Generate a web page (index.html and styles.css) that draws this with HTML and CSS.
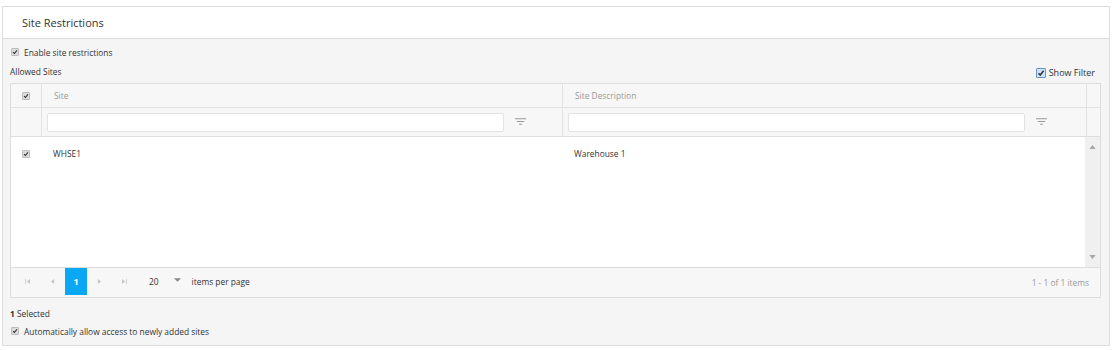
FILE: index.html
```html
<!DOCTYPE html>
<html lang="en">
<head>
    <meta charset="UTF-8">
    <title>Site Restrictions</title>
    <link rel="stylesheet" href="styles.css">
</head>
<body>
    <div class="panel">
        <div class="panel-header">Site Restrictions</div>
        <div class="panel-body">
            <div class="check-line">
                <span class="cb"><svg viewBox="0 0 8 8"><path d="M1.5 4.2 L3.2 6 L6.6 1.8" /></svg></span>
                <span>Enable site restrictions</span>
            </div>
            <div class="sites-bar">
                <span>Allowed Sites</span>
                <label class="show-filter">
                    <span class="cb blue"><svg viewBox="0 0 8 8"><path d="M1.5 4.2 L3.2 6 L6.6 1.8" /></svg></span>
                    Show Filter
                </label>
            </div>

            <div class="grid">
                <div class="grid-head">
                    <div class="cell check-cell"><span class="cb"><svg viewBox="0 0 8 8"><path d="M1.5 4.2 L3.2 6 L6.6 1.8" /></svg></span></div>
                    <div class="cell title">Site</div>
                    <div class="cell title">Site Description</div>
                    <div class="cell spacer"></div>
                </div>
                <div class="grid-filter">
                    <div class="cell check-cell"></div>
                    <div class="cell filter-cell">
                        <input type="text" class="filter-input">
                        <svg class="filter-icon" viewBox="0 0 12 8"><path d="M0 0.5 H12 M2 3.5 H10 M4.5 6.5 H7.5" /></svg>
                    </div>
                    <div class="cell filter-cell">
                        <input type="text" class="filter-input">
                        <svg class="filter-icon" viewBox="0 0 12 8"><path d="M0 0.5 H12 M2 3.5 H10 M4.5 6.5 H7.5" /></svg>
                    </div>
                    <div class="cell spacer"></div>
                </div>
                <div class="grid-content">
                    <div class="rows">
                        <div class="row">
                            <div class="cell check-cell"><span class="cb"><svg viewBox="0 0 8 8"><path d="M1.5 4.2 L3.2 6 L6.6 1.8" /></svg></span></div>
                            <div class="cell">WHSE1</div>
                            <div class="cell">Warehouse 1</div>
                        </div>
                    </div>
                    <div class="scrollbar">
                        <svg viewBox="0 0 8 5"><path d="M0 5 L4 0 L8 5 Z" /></svg>
                        <svg viewBox="0 0 8 5"><path d="M0 0 L4 5 L8 0 Z" /></svg>
                    </div>
                </div>
                <div class="pager">
                    <div class="pager-left">
                        <span class="pg-btn"><svg viewBox="0 0 6 6"><path d="M0.5 0 V6" /><path class="fill" d="M6 0 L2 3 L6 6 Z" /></svg></span>
                        <span class="pg-btn"><svg viewBox="0 0 6 6"><path class="fill" d="M5 0 L1 3 L5 6 Z" /></svg></span>
                        <span class="pg-current">1</span>
                        <span class="pg-btn"><svg viewBox="0 0 6 6"><path class="fill" d="M1 0 L5 3 L1 6 Z" /></svg></span>
                        <span class="pg-btn"><svg viewBox="0 0 6 6"><path class="fill" d="M0 0 L4 3 L0 6 Z" /><path d="M5.5 0 V6" /></svg></span>
                        <span class="pg-size">20 <svg viewBox="0 0 8 5"><path class="fill" d="M0 0 L4 4 L8 0 Z" /></svg></span>
                        <span>items per page</span>
                    </div>
                    <div class="pager-info">1 - 1 of 1 items</div>
                </div>
            </div>

            <div class="selected"><b>1</b> Selected</div>
            <div class="check-line auto">
                <span class="cb"><svg viewBox="0 0 8 8"><path d="M1.5 4.2 L3.2 6 L6.6 1.8" /></svg></span>
                <span>Automatically allow access to newly added sites</span>
            </div>
        </div>
    </div>
</body>
</html>
```
FILE: styles.css
```css
body {
    margin: 0;
    background-color: white;
    font-family: 'Open Sans', 'Noto Sans', sans-serif;
    font-size: 8.4px;
    color: #333;
}

.panel {
    margin: 6px 7px 0 2px;
    border: 1px solid #ddd;
    background-color: #f5f5f5;
    height: 340px;
    box-sizing: border-box;
}

.panel-header {
    height: 31px;
    line-height: 31px;
    padding-left: 19px;
    background-color: white;
    border-bottom: 1px solid #ddd;
    font-size: 11px;
    color: #333;
}

.panel-body {
    padding: 6px 8px 0 7px;
}

/* checkbox look */
.cb {
    display: inline-flex;
    width: 8px;
    height: 8px;
    background-color: #dcdcdc;
    border: 1px solid #bdbdbd;
    border-radius: 1px;
    box-sizing: border-box;
}

.cb svg {
    width: 100%;
    height: 100%;
    fill: none;
    stroke: #333;
    stroke-width: 1.5;
}

.cb.blue {
    width: 10px;
    height: 10px;
    background-color: #cde3f7;
    border-color: #6b93c2;
}

.check-line {
    display: flex;
    align-items: center;
    gap: 5px;
    height: 14px;
    padding-left: 1px;
}

.sites-bar {
    display: flex;
    justify-content: space-between;
    align-items: center;
    height: 24px;
}

.show-filter {
    display: flex;
    align-items: center;
    gap: 3px;
    margin-top: 3px;
    margin-right: 6px;
    font-size: 9px;
}

/* grid */
.grid {
    border: 1px solid #ddd;
    background-color: #f7f7f7;
}

.grid-head,
.grid-filter {
    display: grid;
    grid-template-columns: 30px 521px 524px 15px;
}

.row {
    display: grid;
    grid-template-columns: 30px 521px 1fr;
}

.grid-head {
    height: 23px;
    border-bottom: 1px solid #e3e3e3;
}

.grid-filter {
    height: 28px;
    border-bottom: 1px solid #ddd;
}

.cell {
    display: flex;
    align-items: center;
    padding-left: 12px;
    border-left: 1px solid #e3e3e3;
    min-width: 0;
}

.cell:first-child {
    border-left: none;
}

.check-cell {
    justify-content: center;
    padding-left: 0;
}

.title {
    color: #999;
}

.spacer {
    padding-left: 0;
}

.filter-cell {
    padding-left: 5px;
    gap: 10px;
}

.filter-input {
    width: 457px;
    height: 19px;
    margin: 0;
    padding: 0;
    border: 1px solid #e3e3e3;
    border-radius: 2px;
    background-color: white;
    box-sizing: border-box;
}

.filter-icon {
    width: 11px;
    height: 8px;
    margin-left: 1px;
    stroke: #999;
    stroke-width: 1.2;
}

.grid-content {
    display: flex;
    height: 130px;
    background-color: white;
    border-bottom: 1px solid #ddd;
}

.rows {
    flex: 1;
}

.row {
    height: 33px;
}

.row .cell {
    border-left: none;
}

.scrollbar {
    width: 15px;
    background-color: #f0f0f0;
    display: flex;
    flex-direction: column;
    justify-content: space-between;
    align-items: center;
    padding: 8px 0 8px;
    box-sizing: border-box;
}

.scrollbar svg {
    width: 7px;
    height: 4px;
    fill: #a8a8a8;
}

.pager {
    display: flex;
    justify-content: space-between;
    align-items: flex-start;
    height: 29px;
    background-color: #f7f7f7;
}

.pager-left {
    display: flex;
    align-items: center;
    height: 26px;
    padding-left: 4px;
}

.pg-btn {
    display: flex;
    justify-content: center;
    align-items: center;
    width: 25px;
    height: 26px;
}

.pg-btn svg {
    width: 5px;
    height: 5px;
    stroke: #c8c8c8;
    fill: none;
}

.pg-btn svg .fill,
.pg-size svg .fill {
    fill: #c8c8c8;
    stroke: none;
}

.pg-current {
    display: flex;
    justify-content: center;
    align-items: center;
    width: 22px;
    height: 27px;
    background-color: #0aa8f4;
    color: white;
    font-weight: bold;
    font-size: 9px;
}

.pg-size {
    display: flex;
    align-items: center;
    gap: 15px;
    margin-left: 12px;
    margin-right: 11px;
}

.pg-size svg {
    width: 7px;
    height: 5px;
    margin-bottom: 2px;
}

.pg-size svg .fill {
    fill: #888;
}

.pager-info {
    height: 29px;
    line-height: 29px;
    padding-right: 11px;
    color: #999;
}

.selected {
    margin-top: 10px;
    height: 13px;
}

.auto {
    margin-top: 3px;
}
```
